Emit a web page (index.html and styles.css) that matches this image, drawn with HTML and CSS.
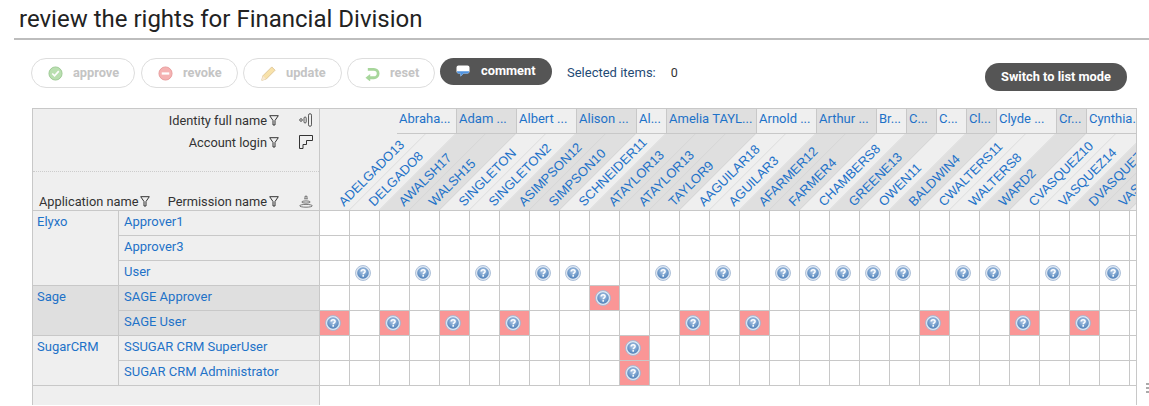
FILE: index.html
```html
<!DOCTYPE html>
<html lang="en">
<head>
<meta charset="utf-8">
<title>review the rights</title>
<link rel="stylesheet" href="styles.css">
</head>
<body>
<svg class="defs" width="0" height="0" aria-hidden="true">
  <defs>
    <radialGradient id="ball" cx="50%" cy="35%" r="70%">
      <stop offset="0" stop-color="#b4cbe6"/><stop offset="0.6" stop-color="#6f9aca"/><stop offset="1" stop-color="#4a7ab3"/>
    </radialGradient>
    <symbol id="help" viewBox="0 0 16 16">
      <circle cx="8" cy="8" r="7.500" fill="#dfe8f3" stroke="#9db4d0" stroke-width="0.800"/>
      <circle cx="8" cy="8" r="5.800" fill="url(#ball)"/>
      <path d="M6.100 6.600c0-1.200.9-1.900 2-1.900s2 .7 2 1.700c0 1.500-1.900 1.500-1.900 2.900" fill="none" stroke="#fff" stroke-width="1.500"/>
      <rect x="7.400" y="10.100" width="1.600" height="1.600" fill="#fff"/>
    </symbol>
    <symbol id="funnel" viewBox="0 0 10 11">
      <path d="M.7.700h8.600L6 5.500V10H4V5.500z" fill="none" stroke="#333" stroke-width="1"/>
    </symbol>
  </defs>
</svg>

<header class="page-title"><h1>review the rights for Financial Division</h1></header>

<div class="toolbar">
  <button class="btn off btn-approve"><svg viewBox="0 0 16 16"><circle cx="8" cy="8" r="7" fill="#8ccb7c" stroke="#5da64d"/><path d="M4.500 8l2.500 2.500 4.500-5" fill="none" stroke="#fff" stroke-width="1.800"/></svg>approve</button>
  <button class="btn off btn-revoke"><svg viewBox="0 0 16 16"><circle cx="8" cy="8" r="7" fill="#f08080" stroke="#d85c5c"/><rect x="4" y="6.800" width="8" height="2.400" fill="#fff"/></svg>revoke</button>
  <button class="btn off btn-update"><svg viewBox="0 0 16 16"><path d="M.8 15.200l1.200-4.700L11.500 1 15 4.500 5.500 14z" fill="#f5cf72" stroke="#c9a256"/><path d="M.8 15.200l1.200-4.700L5.500 14z" fill="#f3d9b5"/></svg>update</button>
  <button class="btn off btn-reset"><svg viewBox="0 0 16 16"><path d="M3 3.500h6.500a4.500 4.500 0 0 1 0 9H3" fill="none" stroke="#6dbb5a" stroke-width="3"/><path d="M.5 12.500L5.500 8.500v8z" fill="#6dbb5a"/></svg>reset</button>
  <button class="btn on btn-comment"><svg viewBox="0 0 14 12"><path d="M2.500 .5h9a2 2 0 0 1 2 2v4a2 2 0 0 1-2 2H7.500L4.500 11.500V8.500h-2a2 2 0 0 1-2-2v-4a2 2 0 0 1 2-2z" fill="#fff"/><path d="M1 6.200h12a1.800 1.800 0 0 1-1.500 2.300H7.500L4.500 11.500V8.500h-2A1.800 1.800 0 0 1 1 6.200z" fill="#4f93e0"/></svg>comment</button>
  <span class="selected">Selected items:</span>
  <span class="selected-count">0</span>
  <button class="btn on btn-switch">Switch to list mode</button>
</div>

<section class="matrix">
  <div class="side">
    <div class="side-head">
      <div class="axis-block">
        <div class="axis-row">Identity full name<svg class="fn"><use href="#funnel"/></svg>
          <svg class="axis-icon" viewBox="0 0 14 14"><circle cx="2" cy="7" r="1.300" fill="none" stroke="#333" stroke-width=".8"/><rect x="5" y="4" width="2.200" height="6" rx="1.100" fill="none" stroke="#333" stroke-width=".8"/><rect x="9.500" y=".7" width="3" height="12.600" rx="1.500" fill="none" stroke="#333" stroke-width=".8"/></svg></div>
        <div class="axis-row">Account login<svg class="fn"><use href="#funnel"/></svg>
          <svg class="axis-icon" viewBox="0 0 14 14"><path d="M.5.500h13v5H7.500v4H4v4H.5z" fill="none" stroke="#333"/></svg></div>
      </div>
      <div class="axis-row axis-bottom">
        <span class="app-label">Application name<svg class="fn"><use href="#funnel"/></svg></span>
        <span class="perm-label">Permission name<svg class="fn"><use href="#funnel"/></svg></span>
        <svg class="axis-icon" viewBox="0 0 14 14"><ellipse cx="7" cy="11.800" rx="6.300" ry="1.400" fill="none" stroke="#444" stroke-width=".7"/><ellipse cx="7" cy="8" rx="4.200" ry="1.100" fill="none" stroke="#444" stroke-width=".7"/><path d="M5.200 4.800h3.600M6 4.500V2.200h2v2.300" fill="none" stroke="#444" stroke-width=".7"/></svg>
      </div>
    </div>
    <div class="app light">
      <div class="app-name">Elyxo</div>
      <div class="perms"><div class="perm">Approver1</div><div class="perm">Approver3</div><div class="perm">User</div></div>
    </div>
    <div class="app dark">
      <div class="app-name">Sage</div>
      <div class="perms"><div class="perm">SAGE Approver</div><div class="perm">SAGE User</div></div>
    </div>
    <div class="app light">
      <div class="app-name">SugarCRM</div>
      <div class="perms"><div class="perm">SSUGAR CRM SuperUser</div><div class="perm">SUGAR CRM Administrator</div></div>
    </div>
    <div class="side-fill"></div>
  </div>

  <div class="main">
    <div class="main-head">
      <div class="groups">
        <div class="group w2">Abraha...</div>
        <div class="group w2 shade">Adam ...</div>
        <div class="group w2">Albert ...</div>
        <div class="group w2 shade">Alison ...</div>
        <div class="group w1">Al...</div>
        <div class="group w3 shade">Amelia TAYL...</div>
        <div class="group w2">Arnold ...</div>
        <div class="group w2 shade">Arthur ...</div>
        <div class="group w1">Br...</div>
        <div class="group w1 shade">C...</div>
        <div class="group w1">C...</div>
        <div class="group w1 shade">Cl...</div>
        <div class="group w2">Clyde ...</div>
        <div class="group w1 shade">Cr...</div>
        <div class="group w2">Cynthia...</div>
      </div>
      <div class="cols">
        <div class="col"><i class="band"></i><span class="login">ADELGADO13</span></div>
        <div class="col"><i class="band"></i><span class="login">DELGADO8</span></div>
        <div class="col"><i class="band shade"></i><span class="login">AWALSH17</span></div>
        <div class="col"><i class="band shade"></i><span class="login">WALSH15</span></div>
        <div class="col"><i class="band"></i><span class="login">SINGLETON</span></div>
        <div class="col"><i class="band"></i><span class="login">SINGLETON2</span></div>
        <div class="col"><i class="band shade"></i><span class="login">ASIMPSON12</span></div>
        <div class="col"><i class="band shade"></i><span class="login">SIMPSON10</span></div>
        <div class="col"><i class="band"></i><span class="login">SCHNEIDER11</span></div>
        <div class="col"><i class="band shade"></i><span class="login">ATAYLOR13</span></div>
        <div class="col"><i class="band shade"></i><span class="login">ATAYLOR13</span></div>
        <div class="col"><i class="band shade"></i><span class="login">TAYLOR9</span></div>
        <div class="col"><i class="band"></i><span class="login">AAGUILAR18</span></div>
        <div class="col"><i class="band"></i><span class="login">AGUILAR3</span></div>
        <div class="col"><i class="band shade"></i><span class="login">AFARMER12</span></div>
        <div class="col"><i class="band shade"></i><span class="login">FARMER4</span></div>
        <div class="col"><i class="band"></i><span class="login">CHAMBERS8</span></div>
        <div class="col"><i class="band shade"></i><span class="login">GREENE13</span></div>
        <div class="col"><i class="band"></i><span class="login">OWEN11</span></div>
        <div class="col"><i class="band shade"></i><span class="login">BALDWIN4</span></div>
        <div class="col"><i class="band"></i><span class="login">CWALTERS11</span></div>
        <div class="col"><i class="band"></i><span class="login">WALTERS8</span></div>
        <div class="col"><i class="band shade"></i><span class="login">WARD2</span></div>
        <div class="col"><i class="band"></i><span class="login">CVASQUEZ10</span></div>
        <div class="col"><i class="band"></i><span class="login">VASQUEZ14</span></div>
        <div class="col"><i class="band shade"></i><span class="login">DVASQUEZ7</span></div>
        <div class="col"><i class="band shade"></i><span class="login">VASQUEZ3</span></div>
        <div class="col"><i class="band"></i><span class="login">VASQUEZ9</span></div>
      </div>
    </div>
    <div class="row"><b></b><b></b><b></b><b></b><b></b><b></b><b></b><b></b><b></b><b></b><b></b><b></b><b></b><b></b><b></b><b></b><b></b><b></b><b></b><b></b><b></b><b></b><b></b><b></b><b></b><b></b><b></b><b></b></div>
    <div class="row"><b></b><b></b><b></b><b></b><b></b><b></b><b></b><b></b><b></b><b></b><b></b><b></b><b></b><b></b><b></b><b></b><b></b><b></b><b></b><b></b><b></b><b></b><b></b><b></b><b></b><b></b><b></b><b></b></div>
    <div class="row"><b></b><b><svg><use href="#help"/></svg></b><b></b><b><svg><use href="#help"/></svg></b><b></b><b><svg><use href="#help"/></svg></b><b></b><b><svg><use href="#help"/></svg></b><b><svg><use href="#help"/></svg></b><b></b><b></b><b><svg><use href="#help"/></svg></b><b></b><b><svg><use href="#help"/></svg></b><b></b><b><svg><use href="#help"/></svg></b><b><svg><use href="#help"/></svg></b><b><svg><use href="#help"/></svg></b><b><svg><use href="#help"/></svg></b><b><svg><use href="#help"/></svg></b><b></b><b><svg><use href="#help"/></svg></b><b><svg><use href="#help"/></svg></b><b></b><b><svg><use href="#help"/></svg></b><b></b><b><svg><use href="#help"/></svg></b><b></b></div>
    <div class="row"><b></b><b></b><b></b><b></b><b></b><b></b><b></b><b></b><b></b><b class="hit"><svg><use href="#help"/></svg></b><b></b><b></b><b></b><b></b><b></b><b></b><b></b><b></b><b></b><b></b><b></b><b></b><b></b><b></b><b></b><b></b><b></b><b></b></div>
    <div class="row"><b class="hit"><svg><use href="#help"/></svg></b><b></b><b class="hit"><svg><use href="#help"/></svg></b><b></b><b class="hit"><svg><use href="#help"/></svg></b><b></b><b class="hit"><svg><use href="#help"/></svg></b><b></b><b></b><b></b><b></b><b></b><b class="hit"><svg><use href="#help"/></svg></b><b></b><b class="hit"><svg><use href="#help"/></svg></b><b></b><b></b><b></b><b></b><b></b><b class="hit"><svg><use href="#help"/></svg></b><b></b><b></b><b class="hit"><svg><use href="#help"/></svg></b><b></b><b class="hit"><svg><use href="#help"/></svg></b><b></b><b></b></div>
    <div class="row"><b></b><b></b><b></b><b></b><b></b><b></b><b></b><b></b><b></b><b></b><b class="hit"><svg><use href="#help"/></svg></b><b></b><b></b><b></b><b></b><b></b><b></b><b></b><b></b><b></b><b></b><b></b><b></b><b></b><b></b><b></b><b></b><b></b></div>
    <div class="row"><b></b><b></b><b></b><b></b><b></b><b></b><b></b><b></b><b></b><b></b><b class="hit"><svg><use href="#help"/></svg></b><b></b><b></b><b></b><b></b><b></b><b></b><b></b><b></b><b></b><b></b><b></b><b></b><b></b><b></b><b></b><b></b><b></b></div>
  </div>
</section>
<div class="grip"></div>
</body>
</html>
```

FILE: styles.css
```css
* { box-sizing: border-box; }
html, body { margin: 0; height: 100%; overflow: hidden; background: #fff; }
body { font-family: Roboto, "Liberation Sans", sans-serif; font-size: 13px; color: #333; position: relative; }
.defs { position: absolute; }

.page-title { margin-left: 14px; height: 40px; border-bottom: 2px solid #bdbdbd; padding: 5px 0 0 5px; }
.page-title h1 { margin: 0; font-size: 24px; line-height: 28px; font-weight: 400; color: #222; }

.toolbar { display: flex; align-items: flex-start; height: 68px; padding: 18px 22px 0 31px; }
.btn { display: flex; align-items: center; font: 700 12.800px Roboto, sans-serif; line-height: 14px; border-radius: 15px; cursor: pointer; }
.btn svg { width: 15px; height: 15px; flex: none; }
.off { height: 30px; background: #fff; border: 1px solid #ddd; color: #c4c4c4; margin-right: 6px; padding: 0 0 1px 16px; }
.off svg { opacity: .6; margin: 1px 10px 0 0; }
.on { background: #555; border: 0; color: #fff; }
.btn-approve { width: 104px; }
.btn-revoke { width: 97px; }
.btn-update { width: 99px; margin-left: -1px; padding-left: 17px; }
.btn-reset { width: 88px; margin-left: -1px; margin-right: 5px; padding: 0 0 1px 17px; }
.btn-comment { width: 112px; height: 27px; padding: 0 0 1px 16px; }
.btn-comment svg { margin: 0 11px 0 0; width: 14px; height: 12px; }
.selected { margin-left: 15px; line-height: 29px; color: #1f4a75; font-size: 13px; }
.selected-count { margin-left: 15px; line-height: 29px; font-size: 12.500px; color: #333; }
.btn-switch { margin: 5px 0 0 auto; width: 142px; height: 28px; padding-bottom: 2px; justify-content: center; }

.matrix { display: flex; margin-left: 32px; width: 1105px; height: 297px; border: solid #c8c8c8; border-width: 1px 1px 0; overflow: hidden; }
.side { width: 287px; flex: none; display: flex; flex-direction: column; border-right: 1px solid #c8c8c8; background: #efefef; }
.side-head { height: 102px; flex: none; border-bottom: 1px solid #c8c8c8; }
.axis-block { height: 63px; border-bottom: 1px dotted #ccc; }
.axis-row { display: flex; align-items: center; justify-content: flex-end; height: 22px; padding-right: 6px; font-size: 12.800px; color: #333; }
.axis-bottom { margin-top: 18px; justify-content: flex-start; padding-left: 6px; }
.fn { width: 10px; height: 11px; margin-left: 2px; flex: none; vertical-align: -1px; }
.axis-icon { width: 14px; height: 14px; margin-left: 20px; flex: none; }
.app-label { width: 129px; white-space: nowrap; }
.perm-label { white-space: nowrap; }

.app { display: flex; border-bottom: 1px solid #c8c8c8; color: #1e72c8; font-size: 13px; }
.light { background: #efefef; }
.dark { background: #dfdfdf; }
.app-name { width: 86px; flex: none; padding: 2px 0 0 4px; border-right: 1px solid #c8c8c8; line-height: 18px; }
.perms { flex: 1; }
.perm { height: 25px; padding: 2px 0 0 5px; line-height: 18px; border-bottom: 1px solid #c8c8c8; }
.perm:last-child { height: 24px; border-bottom: 0; }
.side-fill { flex: 1; }

.main { flex: 1; min-width: 0; overflow: hidden; }
.main-head { height: 102px; background: #efefef; border-bottom: 1px solid #c8c8c8; overflow: hidden; }
.groups { display: flex; height: 25px; margin-left: 77px; position: relative; z-index: 1; }
.group { flex: none; padding: 0 0 0 2px; border-right: 1px solid #c8c8c8; border-bottom: 1px solid #c8c8c8; line-height: 20px; color: #1e72c8; font-size: 13px; white-space: nowrap; background: #efefef; }
.group.shade { background: #dfdfdf; }
.w1 { width: 30px; }
.w2 { width: 60px; }
.w3 { width: 90px; }
.cols { display: flex; height: 76px; }
.col { width: 30px; flex: none; position: relative; }
.band { position: absolute; inset: 0; background: #efefef; border-right: 1px solid #d6d6d6; transform: skewX(-45deg); transform-origin: left bottom; }
.band.shade { background: #dfdfdf; border-right-color: #cfcfcf; }
.login { position: absolute; left: 26px; bottom: 1px; transform: rotate(-45deg); transform-origin: left bottom; white-space: nowrap; color: #1e72c8; font: 13px/14px "Liberation Sans", sans-serif; }

.row { display: flex; height: 25px; border-bottom: 1px solid #c8c8c8; background: #fff; }
.row b { width: 30px; flex: none; border-right: 1px solid #c8c8c8; padding: 4px 0 0 5px; font-weight: 400; }
.row b svg { display: block; width: 16px; height: 16px; }
.row .hit { background: #fa9696; }

.grip { position: absolute; left: 1146px; top: 383px; width: 3px; height: 10px; background: repeating-linear-gradient(#aaa 0 2px, transparent 2px 4px); }
```
